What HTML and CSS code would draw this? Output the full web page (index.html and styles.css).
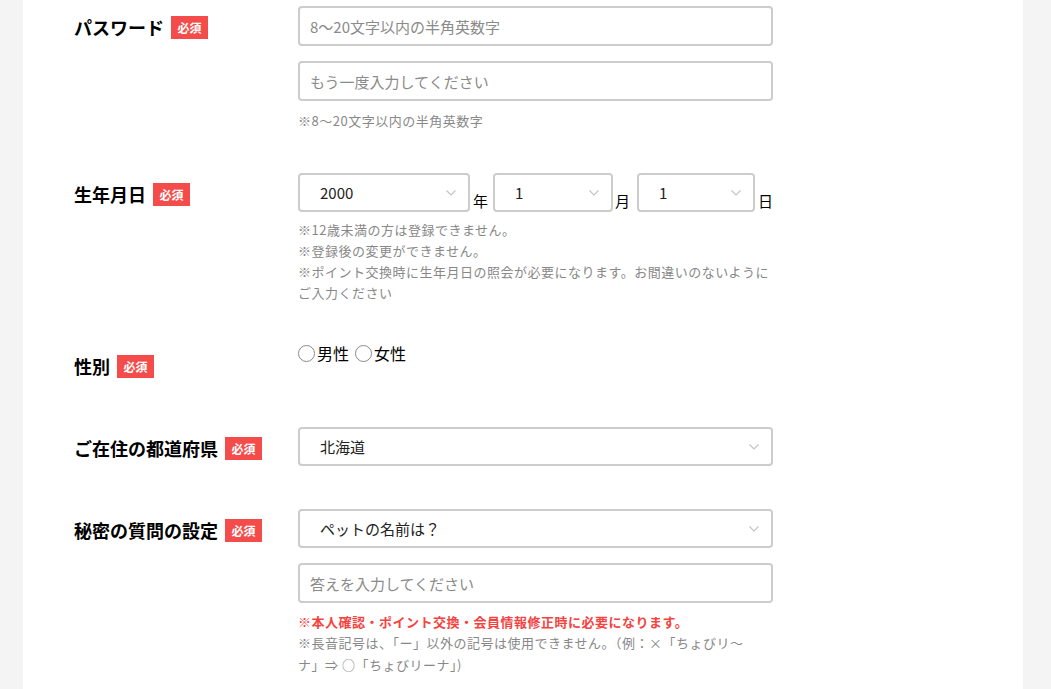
FILE: index.html
```html
<!DOCTYPE html>
<html lang="ja">
<head>
<meta charset="utf-8">
<title>会員登録</title>
<link rel="stylesheet" href="styles.css">
</head>
<body>
<div class="panel">
  <div class="form">
    <div class="row row-gap-42">
      <div class="label"><span class="label-text">パスワード</span><span class="badge">必須</span></div>
      <div class="field">
        <input class="text-input" type="password" placeholder="8〜20文字以内の半角英数字">
        <input class="text-input" type="password" placeholder="もう一度入力してください">
        <p class="note">※8〜20文字以内の半角英数字</p>
      </div>
    </div>

    <div class="row row-gap-42">
      <div class="label"><span class="label-text">生年月日</span><span class="badge">必須</span></div>
      <div class="field">
        <div class="date-line">
          <div class="select select-year"><span class="select-value">2000</span><svg class="chev" width="10" height="6" viewBox="0 0 10 6"><polyline points="0.5,0.5 5,5 9.5,0.5" fill="none" stroke="#c4c4c4" stroke-width="1.2"/></svg></div>
          <span class="unit unit-year">年</span>
          <div class="select select-month"><span class="select-value">1</span><svg class="chev" width="10" height="6" viewBox="0 0 10 6"><polyline points="0.5,0.5 5,5 9.5,0.5" fill="none" stroke="#c4c4c4" stroke-width="1.2"/></svg></div>
          <span class="unit unit-month">月</span>
          <div class="select select-day"><span class="select-value">1</span><svg class="chev" width="10" height="6" viewBox="0 0 10 6"><polyline points="0.5,0.5 5,5 9.5,0.5" fill="none" stroke="#c4c4c4" stroke-width="1.2"/></svg></div>
          <span class="unit unit-day">日</span>
        </div>
        <p class="note">※12歳未満の方は登録できません。<br>※登録後の変更ができません。<br>※ポイント交換時に生年月日の照会が必要になります。お間違いのないように<br>ご入力ください</p>
      </div>
    </div>

    <div class="row row-gap-40">
      <div class="label"><span class="label-text">性別</span><span class="badge">必須</span></div>
      <div class="field">
        <div class="radios">
          <label class="radio"><span class="radio-circle"></span>男性</label>
          <label class="radio"><span class="radio-circle"></span>女性</label>
        </div>
      </div>
    </div>

    <div class="row row-gap-40">
      <div class="label"><span class="label-text">ご在住の都道府県</span><span class="badge">必須</span></div>
      <div class="field">
        <div class="select select-full"><span class="select-value">北海道</span><svg class="chev" width="10" height="6" viewBox="0 0 10 6"><polyline points="0.5,0.5 5,5 9.5,0.5" fill="none" stroke="#c4c4c4" stroke-width="1.2"/></svg></div>
      </div>
    </div>

    <div class="row">
      <div class="label"><span class="label-text">秘密の質問の設定</span><span class="badge">必須</span></div>
      <div class="field">
        <div class="select select-full"><span class="select-value">ペットの名前は？</span><svg class="chev" width="10" height="6" viewBox="0 0 10 6"><polyline points="0.5,0.5 5,5 9.5,0.5" fill="none" stroke="#c4c4c4" stroke-width="1.2"/></svg></div>
        <input class="text-input" type="text" placeholder="答えを入力してください">
        <p class="note note-red">※本人確認・ポイント交換・会員情報修正時に必要になります。</p>
        <p class="note note-after">※長音記号は、「ー」以外の記号は使用できません。（例：×「ちょびリ～<br>ナ」⇒ ○「ちょびリーナ」)</p>
      </div>
    </div>
  </div>
</div>
</body>
</html>
```

FILE: styles.css
```css
html {
  overflow: hidden;
}

body {
  margin: 0;
  background: #f4f4f4;
  font-family: "Noto Sans CJK JP", "Noto Sans", sans-serif;
  color: #000;
}

.panel {
  width: 1000px;
  min-height: 689px;
  margin-left: 23px;
  background: #fff;
  padding: 6px 0 0 51px;
  box-sizing: border-box;
}

.row {
  display: grid;
  grid-template-columns: 224px 475px;
  align-items: start;
}

.row-gap-42 {
  margin-bottom: 42px;
}

.row-gap-40 {
  margin-bottom: 40px;
}

.label {
  height: 42px;
  display: flex;
  align-items: center;
}

.label-text {
  font-size: 18px;
  font-weight: 700;
  line-height: 26px;
  color: #000;
}

.badge {
  margin-left: 7px;
  width: 37px;
  height: 23px;
  background: #f44b4b;
  color: #fff;
  font-size: 12px;
  font-weight: 700;
  line-height: 23px;
  text-align: center;
}

.field {
  display: flex;
  flex-direction: column;
  gap: 15px;
}

.text-input {
  display: block;
  width: 475px;
  height: 40px;
  box-sizing: border-box;
  border: 2px solid #cccccc;
  border-radius: 4px;
  padding: 0 10px;
  font-family: "Noto Sans CJK JP", "Noto Sans", sans-serif;
  font-size: 15px;
  color: #333;
  background: #fff;
  outline: none;
}

.text-input::placeholder {
  color: #8a8a8a;
}

.note {
  margin: -6px 0 0 0;
  font-size: 13px;
  line-height: 21px;
  letter-spacing: 0.5px;
  color: #888;
  white-space: nowrap;
}

.note-red {
  color: #f5433f;
  font-weight: 700;
  margin-top: -7px;
}

.note-after {
  margin-top: -15px;
  line-height: 22px;
}

.date-line {
  display: flex;
  align-items: flex-end;
  margin-bottom: -2px;
}

.select {
  height: 39px;
  box-sizing: border-box;
  border: 2px solid #cccccc;
  border-radius: 4px;
  background: #fff;
  display: flex;
  align-items: center;
  justify-content: space-between;
  padding: 0 12px 0 20px;
  font-size: 15px;
  color: #222;
}

.select-value {
  line-height: 20px;
}

.chev {
  display: block;
  flex: none;
}

.select-year {
  width: 172px;
}

.select-month {
  width: 120px;
}

.select-day {
  width: 118px;
}

.select-full {
  width: 475px;
}

.unit {
  font-size: 15px;
  line-height: 20px;
  color: #000;
  margin-bottom: 1px;
}

.unit-year {
  margin-left: 3px;
  margin-right: 5px;
}

.unit-month {
  margin-left: 2px;
  margin-right: 7px;
}

.unit-day {
  margin-left: 3px;
}

.radios {
  display: flex;
  align-items: center;
  gap: 6px;
  margin-top: -2px;
  height: 20px;
}

.radio {
  display: flex;
  align-items: center;
  font-size: 16px;
  line-height: 20px;
  color: #000;
}

.radio-circle {
  width: 17px;
  height: 17px;
  box-sizing: border-box;
  border: 1.5px solid #8a8a8a;
  border-radius: 50%;
  background: #fff;
  margin-right: 2px;
}
```
